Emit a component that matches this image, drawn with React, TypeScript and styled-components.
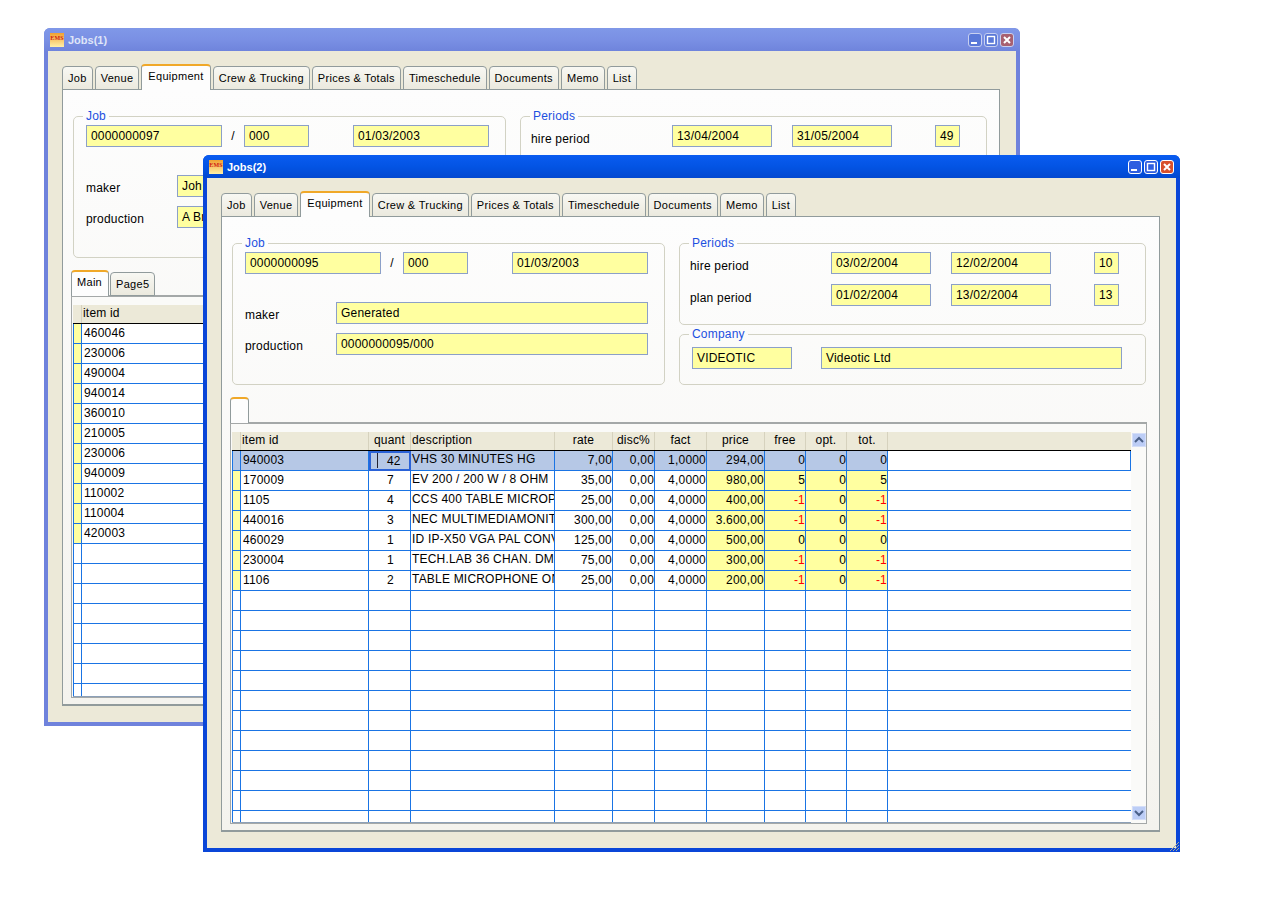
import React from 'react';
import styled, { createGlobalStyle } from 'styled-components';

interface GridRow {
  cells: string[];
  selected?: boolean;
}

interface JobWindow {
  title: string;
  active: boolean;
  x: number;
  y: number;
  width: number;
  height: number;
  job: string;
  revision: string;
  date: string;
  maker: string;
  production: string;
  hire: string[];
  plan: string[];
  planLabel: string;
  companyLegend: string;
  company: string[];
  subTabs: string[];
  headers: string[];
  rows: GridRow[];
}

const TOTAL_ROWS = 19;
const TABS = ['Job', 'Venue', 'Equipment', 'Crew & Trucking', 'Prices & Totals', 'Timeschedule', 'Documents', 'Memo', 'List'];
const COLUMNS = '9px 128px 42px 144px 58px 42px 52px 58px 41px 41px 41px 243px';
const ALL_HEADERS = ['item id', 'quant', 'description', 'rate', 'disc%', 'fact', 'price', 'free', 'opt.', 'tot.'];

const idRow = (id: string): GridRow => ({ cells: [id, '', '', '', '', '', '', '', '', ''] });

const WINDOWS: JobWindow[] = [
  {
    title: 'Jobs(1)',
    active: false,
    x: 44,
    y: 28,
    width: 976,
    height: 698,
    job: '0000000097',
    revision: '000',
    date: '01/03/2003',
    maker: 'Joh',
    production: 'A Br',
    hire: ['13/04/2004', '31/05/2004', '49'],
    plan: ['', '', ''],
    planLabel: '',
    companyLegend: '',
    company: ['', ''],
    subTabs: ['Main', 'Page5'],
    headers: ['item id', '', '', '', '', '', '', '', '', ''],
    rows: ['460046', '230006', '490004', '940014', '360010', '210005', '230006', '940009', '110002', '110004', '420003'].map(idRow),
  },
  {
    title: 'Jobs(2)',
    active: true,
    x: 203,
    y: 155,
    width: 977,
    height: 697,
    job: '0000000095',
    revision: '000',
    date: '01/03/2003',
    maker: 'Generated',
    production: '0000000095/000',
    hire: ['03/02/2004', '12/02/2004', '10'],
    plan: ['01/02/2004', '13/02/2004', '13'],
    planLabel: 'plan period',
    companyLegend: 'Company',
    company: ['VIDEOTIC', 'Videotic Ltd'],
    subTabs: [''],
    headers: ALL_HEADERS,
    rows: [
      { selected: true, cells: ['940003', '42', 'VHS 30 MINUTES HG', '7,00', '0,00', '1,0000', '294,00', '0', '0', '0'] },
      { cells: ['170009', '7', 'EV 200 / 200 W / 8 OHM', '35,00', '0,00', '4,0000', '980,00', '5', '0', '5'] },
      { cells: ['1105', '4', 'CCS 400 TABLE MICROPHONE', '25,00', '0,00', '4,0000', '400,00', '-1', '0', '-1'] },
      { cells: ['440016', '3', 'NEC MULTIMEDIAMONITOR', '300,00', '0,00', '4,0000', '3.600,00', '-1', '0', '-1'] },
      { cells: ['460029', '1', 'ID IP-X50 VGA PAL CONVERTER', '125,00', '0,00', '4,0000', '500,00', '0', '0', '0'] },
      { cells: ['230004', '1', 'TECH.LAB 36 CHAN. DMX', '75,00', '0,00', '4,0000', '300,00', '-1', '0', '-1'] },
      { cells: ['1106', '2', 'TABLE MICROPHONE ON', '25,00', '0,00', '4,0000', '200,00', '-1', '0', '-1'] },
    ],
  },
];

const AppIcon = () => (
  <svg width="14" height="14" viewBox="0 0 14 14">
    <defs>
      <linearGradient id="iconFill" x1="0" y1="0" x2="0" y2="1">
        <stop offset="0" stopColor="#f0a030" />
        <stop offset="1" stopColor="#fff0a8" />
      </linearGradient>
    </defs>
    <rect width="14" height="14" fill="url(#iconFill)" />
    <text x="7" y="7" textAnchor="middle" fontSize="6" fontWeight="700" fontFamily="Liberation Serif, serif" fill="#d02010">
      EMS
    </text>
  </svg>
);

const CaptionGlyph = ({ kind }: { kind: 'min' | 'max' | 'close' }) => (
  <svg width="12" height="12" viewBox="0 0 12 12">
    {kind === 'min' && <rect x="2" y="8" width="6" height="2" fill="#fff" />}
    {kind === 'max' && <rect x="2.5" y="2.5" width="7" height="7" fill="none" stroke="#fff" strokeWidth="1.4" />}
    {kind === 'close' && <path d="M3 3 L9 9 M9 3 L3 9" stroke="#fff" strokeWidth="2" />}
  </svg>
);

const Chevron = ({ up }: { up?: boolean }) => (
  <svg width="10" height="8" viewBox="0 0 10 8">
    <path d={up ? 'M1 6 L5 2 L9 6' : 'M1 2 L5 6 L9 2'} fill="none" stroke="#4a6088" strokeWidth="2" />
  </svg>
);

const Window = ({ win }: { win: JobWindow }) => {
  const blanks = Array.from({ length: TOTAL_ROWS - win.rows.length }, () => ({ cells: Array(10).fill('') as string[] }));

  return (
    <Frame $active={win.active} $x={win.x} $y={win.y} $w={win.width} $h={win.height}>
      <TitleBar $active={win.active}>
        <AppIcon />
        <TitleText $active={win.active}>{win.title}</TitleText>
        <Captions>
          <CaptionButton $active={win.active}><CaptionGlyph kind="min" /></CaptionButton>
          <CaptionButton $active={win.active}><CaptionGlyph kind="max" /></CaptionButton>
          <CaptionButton $active={win.active} $close><CaptionGlyph kind="close" /></CaptionButton>
        </Captions>
      </TitleBar>

      <Client>
        <TabBar>
          {TABS.map(tab => (
            <Tab key={tab} $current={tab === 'Equipment'}>{tab}</Tab>
          ))}
        </TabBar>

        <Panel>
          <TopSection>
            <JobBox>
              <Legend>Job</Legend>
              <JobLine>
                <Field $w={136}>{win.job}</Field>
                <Slash>/</Slash>
                <Field $w={65}>{win.revision}</Field>
                <DateField $w={136}>{win.date}</DateField>
              </JobLine>
              <LabelledLine>
                <JobLabel>maker</JobLabel>
                <Field $w={312}>{win.maker}</Field>
              </LabelledLine>
              <LabelledLine>
                <JobLabel>production</JobLabel>
                <Field $w={312}>{win.production}</Field>
              </LabelledLine>
            </JobBox>

            <SideColumn>
              <PeriodsBox>
                <PeriodsLegend>Periods</PeriodsLegend>
                <PeriodGrid>
                  <PeriodLabel>hire period</PeriodLabel>
                  <Field>{win.hire[0]}</Field>
                  <Field>{win.hire[1]}</Field>
                  <NumberField>{win.hire[2]}</NumberField>
                  <PeriodLabel>{win.planLabel}</PeriodLabel>
                  <Field>{win.plan[0]}</Field>
                  <Field>{win.plan[1]}</Field>
                  <NumberField>{win.plan[2]}</NumberField>
                </PeriodGrid>
              </PeriodsBox>

              <CompanyBox>
                <Legend>{win.companyLegend}</Legend>
                <CompanyLine>
                  <Field $w={100}>{win.company[0]}</Field>
                  <Field $w={301}>{win.company[1]}</Field>
                </CompanyLine>
              </CompanyBox>
            </SideColumn>
          </TopSection>

          <SubTabBar>
            {win.subTabs.map((tab, i) => (
              <SubTab key={tab || 'blank'} $current={i === 0}>{tab}</SubTab>
            ))}
          </SubTabBar>

          <SubPanel>
            <GridFrame>
              <GridHeader>
                <HeaderCell />
                {win.headers.map((label, i) => (
                  <HeaderCell key={i} $left={i === 0 || i === 2}>{label}</HeaderCell>
                ))}
                <HeaderFill />
              </GridHeader>
              <GridBody>
                {[...win.rows, ...blanks].map((row, r) => (
                  <RowLine key={r}>
                    <MarkerCell $filled={win.rows[r] !== undefined} $selected={row.selected} />
                    <IdCell $selected={row.selected}>{row.cells[0]}</IdCell>
                    <QuantCell $selected={row.selected}>{row.cells[1]}</QuantCell>
                    <DescriptionCell $selected={row.selected}>{row.cells[2]}</DescriptionCell>
                    {row.cells.slice(3).map((value, c) => (
                      <NumberCell
                        key={c}
                        $selected={row.selected}
                        $yellow={c >= 3 && value !== ''}
                        $negative={value.startsWith('-')}
                      >
                        {value}
                      </NumberCell>
                    ))}
                    <FillCell $selected={row.selected} />
                  </RowLine>
                ))}
              </GridBody>
            </GridFrame>
            <ScrollColumn>
              <ScrollButton><Chevron up /></ScrollButton>
              <ScrollButton><Chevron /></ScrollButton>
            </ScrollColumn>
          </SubPanel>
        </Panel>
      </Client>

      <Grip width="12" height="12" viewBox="0 0 12 12">
        <path d="M11 2 L2 11 M11 5 L5 11 M11 8 L8 11" stroke="#a8a898" strokeWidth="1" />
      </Grip>
    </Frame>
  );
};

const App = () => (
  <>
    <GlobalStyle />
    <Desktop>
      {WINDOWS.map(win => (
        <Window key={win.title} win={win} />
      ))}
    </Desktop>
  </>
);

const GlobalStyle = createGlobalStyle`
  html, body {
    margin: 0;
    background: #fff;
  }
  body {
    font-family: "Liberation Sans", Arial, sans-serif;
    font-size: 12px;
    letter-spacing: 0.2px;
    color: #000;
  }
  * {
    box-sizing: border-box;
  }
`;

const Desktop = styled.div`
  position: relative;
  width: 1280px;
  height: 922px;
  overflow: hidden;
`;

const Frame = styled.div<{ $active: boolean; $x: number; $y: number; $w: number; $h: number }>`
  position: absolute;
  left: ${p => p.$x}px;
  top: ${p => p.$y}px;
  width: ${p => p.$w}px;
  height: ${p => p.$h}px;
  display: flex;
  flex-direction: column;
  border-radius: 6px 6px 0 0;
  background: ${p => (p.$active ? '#0a46d8' : '#6f82dc')};
`;

const TitleBar = styled.div<{ $active: boolean }>`
  flex: 0 0 23px;
  display: flex;
  align-items: center;
  gap: 4px;
  padding: 0 6px;
  border-radius: 6px 6px 0 0;
  background: ${p =>
    p.$active
      ? 'linear-gradient(#0a5cf0 0%, #0354e4 50%, #0348d0 100%)'
      : 'linear-gradient(#8098e8 0%, #7a90e4 50%, #6f84dc 100%)'};
`;

const TitleText = styled.span<{ $active: boolean }>`
  font-size: 11px;
  font-weight: 700;
  letter-spacing: 0;
  color: ${p => (p.$active ? '#fff' : '#dfe5f8')};
`;

const Captions = styled.div`
  margin-left: auto;
  display: flex;
  gap: 2px;
`;

const CaptionButton = styled.div<{ $active: boolean; $close?: boolean }>`
  width: 14px;
  height: 14px;
  display: flex;
  align-items: center;
  justify-content: center;
  border: 1px solid ${p => (p.$active ? '#fff' : '#c8d0f0')};
  border-radius: 3px;
  background: ${p => {
    if (p.$close) return p.$active ? '#d8502c' : '#a86070';
    return p.$active ? '#2f5ee0' : '#5a78d8';
  }};
`;

const Client = styled.div`
  flex: 1;
  min-height: 0;
  display: flex;
  flex-direction: column;
  margin: 0 4px 4px;
  padding: 13px 16px 16px 14px;
  background: #ece9d8;
`;

const TabBar = styled.div`
  flex: 0 0 26px;
  display: flex;
  align-items: flex-end;
  gap: 2px;
  position: relative;
  z-index: 1;
  margin-bottom: -1px;
`;

const Tab = styled.div<{ $current: boolean }>`
  height: ${p => (p.$current ? 26 : 24)}px;
  padding: ${p => (p.$current ? '4px 6px 0' : '5px 5px 0')};
  font-size: 11px;
  letter-spacing: 0.3px;
  white-space: nowrap;
  border: 1px solid #919b9c;
  border-bottom: ${p => (p.$current ? 'none' : '1px solid #919b9c')};
  border-top: ${p => (p.$current ? '2px solid #f0a828' : '1px solid #919b9c')};
  border-radius: 4px 4px 0 0;
  background: ${p => (p.$current ? '#fdfdfd' : 'linear-gradient(#f8f8f3, #ebe9de)')};
`;

const Panel = styled.div`
  flex: 1;
  min-height: 0;
  display: flex;
  flex-direction: column;
  padding: 19px 12px 6px 8px;
  border: 1px solid #919b9c;
  border-bottom-width: 2px;
  background: linear-gradient(#fdfdfd, #f4f3ee);
`;

const TopSection = styled.div`
  flex: 0 0 149px;
  display: grid;
  grid-template-columns: 433px 467px;
  gap: 14px;
  margin-left: 2px;
`;

const GroupBox = styled.fieldset`
  margin: 0;
  min-width: 0;
  padding: 2px 12px 0;
  border: 1px solid #d2d2c4;
  border-radius: 5px;
`;

const Legend = styled.legend`
  height: 14px;
  line-height: 14px;
  margin-left: -3px;
  padding: 0 3px;
  font-size: 12px;
  color: #1c50e0;
`;

const PeriodsLegend = styled(Legend)`
  margin-left: -1px;
`;

const JobBox = styled(GroupBox)``;

const SideColumn = styled.div`
  display: flex;
  flex-direction: column;
  gap: 2px;
`;

const PeriodsBox = styled(GroupBox)`
  padding: 2px 10px 18px;
`;

const CompanyBox = styled(GroupBox)`
  flex: 1;
  padding: 6px 12px 0;
`;

const JobLine = styled.div`
  display: flex;
  align-items: center;
`;

const Field = styled.div<{ $w?: number }>`
  flex: none;
  width: ${p => (p.$w ? `${p.$w}px` : 'auto')};
  height: 22px;
  line-height: 20px;
  padding: 0 4px;
  border: 1px solid #8ca0c8;
  background: #ffffa0;
  white-space: nowrap;
  overflow: hidden;
`;

const NumberField = styled(Field)`
  padding-right: 7px;
  text-align: right;
`;

const DateField = styled(Field)`
  margin-left: 44px;
`;

const Slash = styled.span`
  width: 22px;
  text-align: center;
`;

const LabelledLine = styled.div`
  display: flex;
  align-items: center;
  margin-top: 9px;

  ${JobLine} + & {
    margin-top: 28px;
  }
`;

const JobLabel = styled.span`
  width: 91px;
  padding-top: 4px;
`;

const PeriodGrid = styled.div`
  display: grid;
  grid-template-columns: 121px 100px 100px 48px;
  column-gap: 20px;
  row-gap: 10px;
  align-items: center;

  & > :nth-child(4n) {
    margin-left: 23px;
  }
  & > :nth-child(4n + 1) {
    margin-right: -20px;
  }
`;

const PeriodLabel = styled.span`
  padding-top: 5px;
`;

const CompanyLine = styled.div`
  display: flex;
  gap: 29px;
`;

const SubTabBar = styled.div`
  flex: 0 0 26px;
  display: flex;
  align-items: flex-end;
  gap: 1px;
  margin-top: 12px;
  position: relative;
  z-index: 1;
  margin-bottom: -1px;
`;

const SubTab = styled.div<{ $current: boolean }>`
  min-width: 19px;
  height: ${p => (p.$current ? 26 : 24)}px;
  padding: ${p => (p.$current ? '4px 6px 0 5px' : '5px 5px 0')};
  font-size: 11px;
  letter-spacing: 0.3px;
  border: 1px solid #919b9c;
  border-bottom: ${p => (p.$current ? 'none' : '1px solid #919b9c')};
  border-top: ${p => (p.$current ? '2px solid #f0a828' : '1px solid #919b9c')};
  border-radius: 4px 4px 0 0;
  background: ${p => (p.$current ? '#fdfdfd' : 'linear-gradient(#f8f8f3, #ebe9de)')};
`;

const SubPanel = styled.div`
  flex: 1;
  min-height: 0;
  display: flex;
  padding: 8px 0 0 1px;
  border: 1px solid #a4a8a8;
  border-top-width: 2px;
  background: #fafaf8;
`;

const GridFrame = styled.div`
  width: 899px;
  display: flex;
  flex-direction: column;
  min-height: 0;
`;

const GridHeader = styled.div`
  flex: 0 0 19px;
  display: grid;
  grid-template-columns: ${COLUMNS};
  background: #ece9d8;
  border-bottom: 1px solid #000;
`;

const HeaderCell = styled.div<{ $left?: boolean }>`
  line-height: 17px;
  padding-left: ${p => (p.$left ? '1px' : '0')};
  text-align: ${p => (p.$left ? 'left' : 'center')};
  border-right: 1px solid #d6d2be;
  white-space: nowrap;
  overflow: hidden;
`;

const HeaderFill = styled.div``;

const GridBody = styled.div`
  flex: 1;
  min-height: 0;
  overflow: hidden;
  border-bottom: 1px solid #8ca0b8;
`;

const RowLine = styled.div`
  height: 20px;
  display: grid;
  grid-template-columns: ${COLUMNS};
`;

const BodyCell = styled.div<{ $selected?: boolean }>`
  position: relative;
  height: 20px;
  line-height: 19px;
  border-right: 1px solid #1a74e4;
  border-bottom: 1px solid #1a74e4;
  background: ${p => (p.$selected ? '#b6c8e6' : '#fff')};
  white-space: nowrap;
  overflow: hidden;
`;

const MarkerCell = styled(BodyCell)<{ $filled: boolean }>`
  border-left: 1px solid #1a74e4;
  background: ${p => {
    if (p.$selected) return '#b6c8e6';
    return p.$filled ? '#ffffa0' : '#fff';
  }};
`;

const IdCell = styled(BodyCell)`
  padding-left: 2px;
`;

const QuantCell = styled(BodyCell)`
  padding-left: ${p => (p.$selected ? '16px' : '18px')};
  ${p =>
    p.$selected &&
    `
    line-height: 16px;
    border: 2px solid #2a62d8;
    &::before {
      content: '';
      position: absolute;
      left: 6px;
      top: 0;
      bottom: 1px;
      width: 1px;
      background: #223;
    }
  `}
`;

const DescriptionCell = styled(BodyCell)`
  padding-left: 1px;
  line-height: 17px;
`;

const NumberCell = styled(BodyCell)<{ $yellow?: boolean; $negative?: boolean }>`
  text-align: right;
  padding-right: 0;
  color: ${p => (p.$negative ? '#f00' : '#000')};
  background: ${p => {
    if (p.$selected) return '#b6c8e6';
    return p.$yellow ? '#ffffa0' : '#fff';
  }};
`;

const FillCell = styled(BodyCell)`
  background: #fff;
  border-right: ${p => (p.$selected ? '1px solid #1a74e4' : 'none')};
`;

const ScrollColumn = styled.div`
  flex: 1;
  display: flex;
  flex-direction: column;
  justify-content: space-between;
  align-items: center;
  padding: 1px 0 3px;
`;

const ScrollButton = styled.div`
  width: 14px;
  height: 14px;
  display: flex;
  align-items: center;
  justify-content: center;
  background: #bccdf6;
  border: 1px solid #d4def8;
`;

const Grip = styled.svg`
  position: absolute;
  right: 0;
  bottom: 0;
`;

export default App;
